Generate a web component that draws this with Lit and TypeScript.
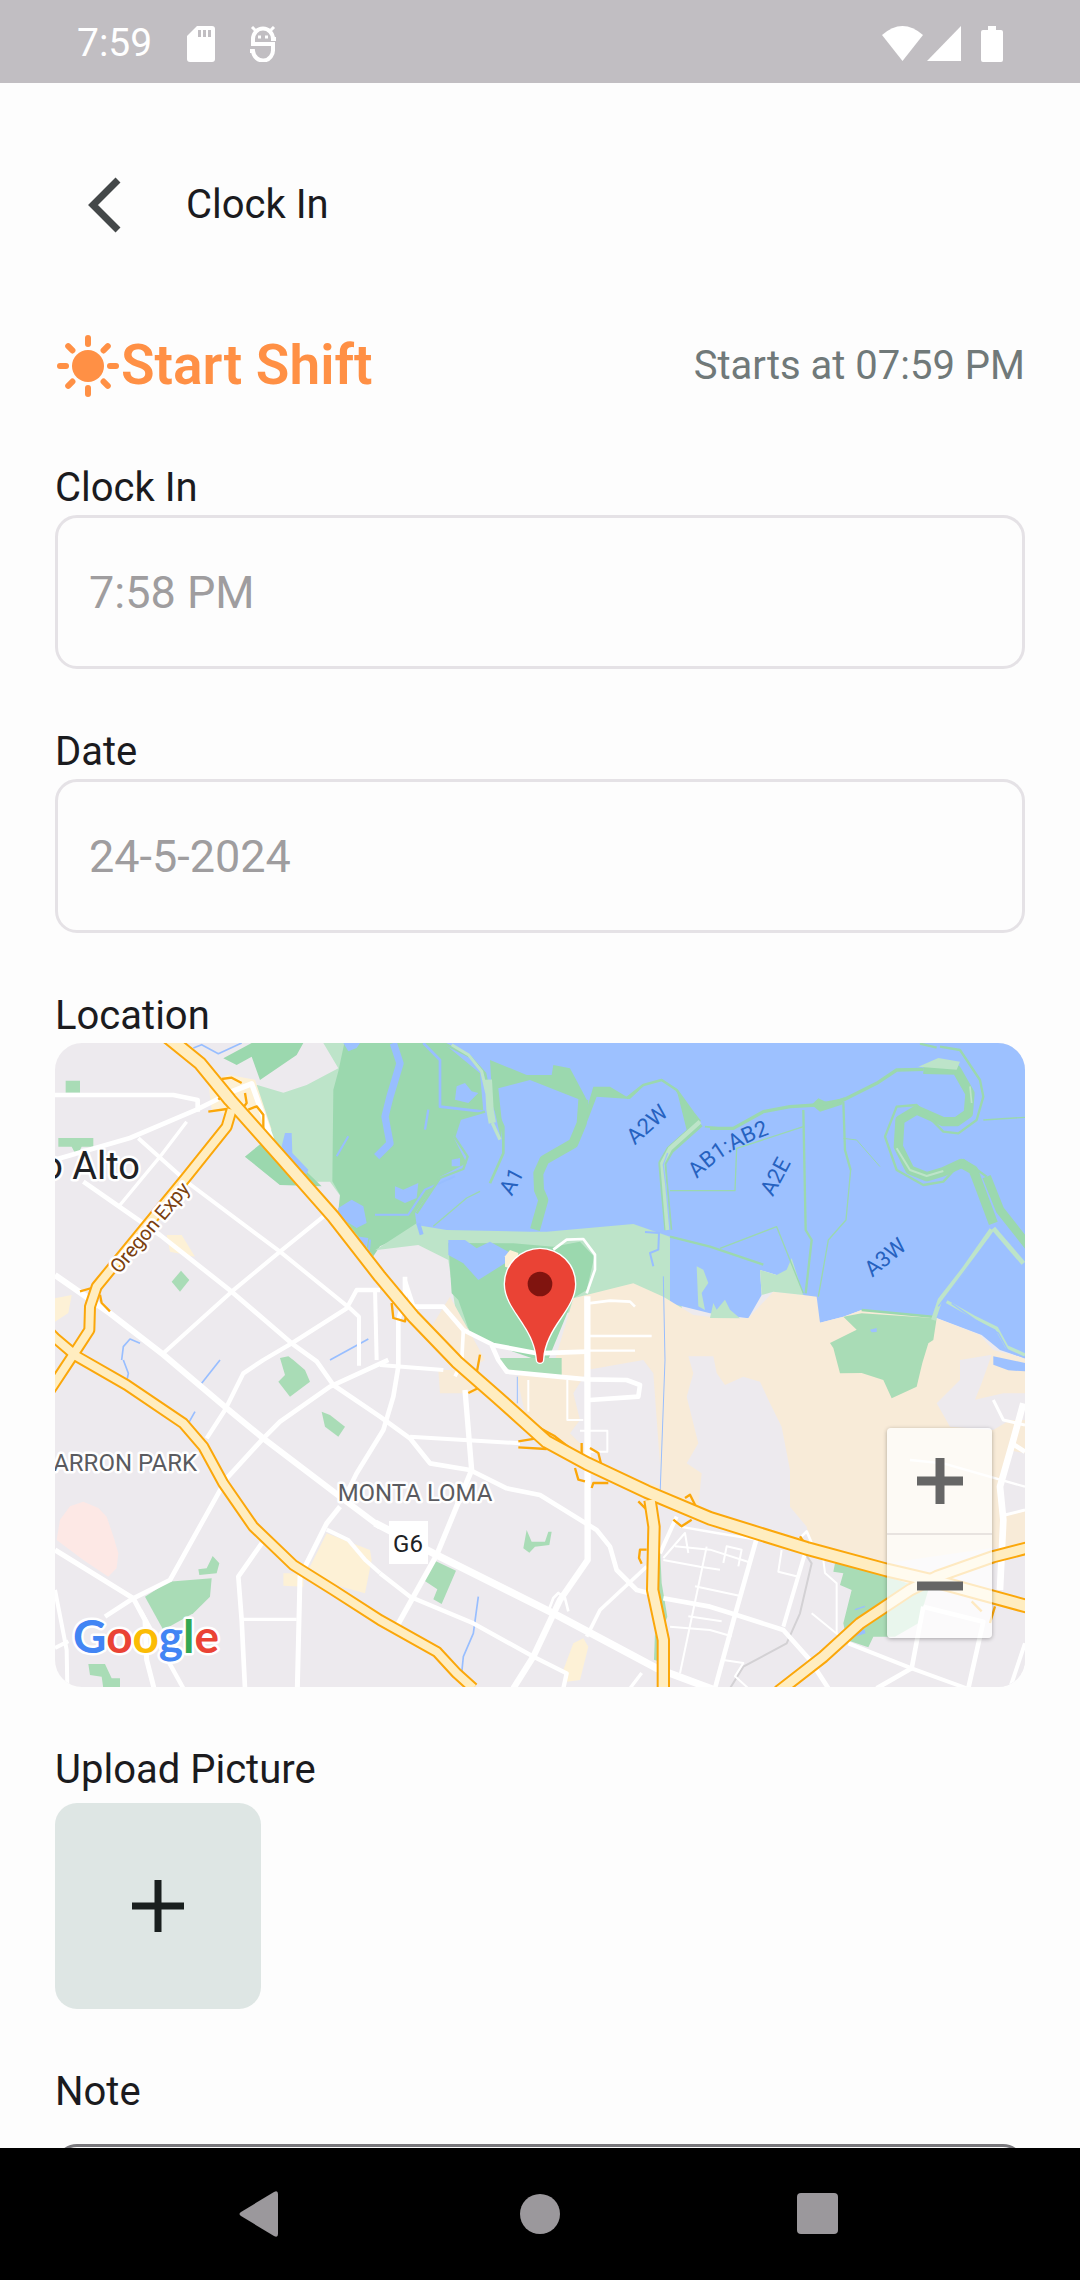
import { LitElement, html, svg, css } from "lit";
import { customElement, state } from "lit/decorators.js";

// Map geometry is stored in thirds of a pixel, on a 2910 x 1932 sheet.
const AREAS: [string, string][] = [
  // parks and marsh
  ["light", "607,126 685,149 755,126 850,76 805,0 900,0 900,520 825,416 785,416 675,426 570,341 625,296 650,281 600,126"],
  ["marsh", "505,46 590,0 745,0 725,36 615,111 590,41 545,66"],
  ["marsh", "570,341 625,296 650,285 800,430 675,426"],
  ["marsh", "868,0 850,85 835,140 832,415 855,455 850,505 955,640 975,610 1100,555 1300,420 1300,0"],
  ["light", "960,622 1085,541 1175,555 1435,560 1475,560 1735,540 1850,566 1850,731 1880,736 1880,800 1735,760 1595,800 1210,861 1180,651 1090,606"],
  ["marsh", "1180,600 1375,601 1495,611 1575,596 1618,641 1595,741 1555,766 1475,961 1375,926 1245,871 1210,771 1190,751"],
  ["water", "1165,0 2910,0 2910,946 2835,921 2780,876 2635,821 2420,801 2365,821 2295,839 2245,756 2165,696 2115,681 2120,756 2080,826 1965,811 1845,781 1845,581 1735,543 1475,566 1425,566 1175,561 1085,546 1080,511 1155,401 1235,361 1195,281 1215,226 1285,206 1275,91"],
  ["water", "1180,591 1230,591 1265,616 1305,596 1360,626 1350,661 1270,711 1225,661 1180,636"],
  ["tan", "1555,766 1735,721 1825,761 1915,816 1965,821 2055,826 2080,826 2155,746 2245,756 2285,761 2295,839 2365,821 2420,801 2645,826 2775,876 2815,921 2910,946 2910,1501 2495,1561 2265,1501 1965,1406 1825,1351 1575,1231 1415,1131 1385,1001 1500,951"],
  ["land", "1580,1011 1595,981 1765,951 1795,991 1820,1331 1675,1291 1605,1231 1545,1171 1575,1131 1555,1051"],
  ["land", "1900,940 1975,940 1985,990 2010,1026 2065,1001 2115,1016 2145,1081 2180,1151 2205,1281 2205,1391 2255,1451 2265,1496 1965,1406 1930,1390 1940,1291 1895,1261 1930,1201 1895,1061 1915,991"],
  ["land", "2715,951 2810,935 2780,1020 2760,1070 2845,1051 2910,1051 2910,1131 2865,1131 2815,1161 2685,1151 2645,1081 2685,1041 2715,1011"],
  ["land", "2835,1301 2860,1221 2910,1231 2910,1401 2845,1421"],
  ["land", "2310,1560 2910,1701 2910,1932 2200,1932"],
  ["light", "2115,681 2165,696 2195,680 2210,645 2245,756 2155,746 2120,756"],
  ["light", "1965,825 1975,780 1985,800 2010,770 2025,800 2055,826"],
  ["light", "1925,670 1945,680 1960,720 1940,750 1950,801 1930,790"],
  ["park", "2420,811 2645,826 2635,891 2620,901 2602,960 2585,1031 2510,1066 2485,1011 2420,990 2355,991 2335,915 2325,900 2405,860 2365,821"],
  ["water", "2815,940 2910,960 2910,985 2860,982 2815,965"],
  ["park", "1325,945 1520,945 1520,999 1375,993"],
  ["park", "32,113 75,113 75,149 32,149"],
  ["park", "10,285 115,285 115,311 80,311 65,340 50,311 10,311"],
  ["park", "350,716 375,746 403,711 378,683"],
  ["park", "675,945 700,940 715,951 750,981 765,1016 705,1061 670,1016 690,996"],
  ["park", "800,1106 825,1116 870,1151 850,1181 810,1151"],
  ["park", "270,1661 340,1616 470,1606 465,1661 415,1711 325,1761"],
  ["park", "430,1579 455,1576 473,1539 493,1561 485,1591 433,1596"],
  ["park", "100,1863 150,1863 170,1906 195,1906 195,1936 145,1936 140,1901 105,1896"],
  ["park", "1135,1551 1203,1583 1160,1683 1135,1669 1147,1639 1105,1611"],
  ["park", "1415,1461 1430,1496 1470,1496 1480,1466 1490,1466 1483,1506 1440,1511 1423,1529 1405,1516"],
  ["park", "1815,1511 1820,1620 1837,1721 1830,1740 1800,1650"],
  ["park", "1800,1770 1825,1860 1797,1850"],
  ["park", "2340,1561 2405,1571 2620,1641 2590,1741 2520,1781 2480,1781 2455,1781 2440,1813 2375,1791 2365,1741 2390,1641 2355,1626 2365,1591 2335,1586"],
  ["cream", "815,1471 945,1521 950,1551 930,1651 860,1631 755,1591"],
  ["cream", "685,1591 745,1591 745,1631 685,1628"],
  ["cream", "1585,1786 1600,1811 1575,1911 1535,1916 1525,1881 1555,1801"],
  ["cream", "335,576 380,576 420,641 345,626"],
  ["cream", "0,766 50,756 40,810 0,836"],
  ["cream", "460,120 520,95 600,110 650,260 560,230 470,200"],
  ["tan", "1150,981 1275,981 1275,1051 1155,1051"],
  ["tan", "1185,761 1240,860 1290,950 1240,980 1130,850"],
  ["cream", "1350,640 1365,621 1390,630 1380,680 1350,671"],
  ["rose", "85,1376 130,1395 155,1421 175,1480 190,1531 185,1575 160,1601 85,1551 5,1491 15,1430 45,1390"],
  // ponds inside the marsh
  ["water", "865,0 915,0 905,15 880,25"],
  ["water", "690,270 710,270 712,330 760,380 755,393 710,380 680,310"],
  ["water", "850,495 890,470 925,490 935,540 905,555 850,520"],
  ["water", "905,580 940,585 935,615 915,605"],
  ["water", "1020,430 1045,440 1090,420 1085,465 1050,480 1020,465"],
  ["water", "1205,130 1230,120 1250,145 1270,150 1240,180 1200,170"],
  ["water", "1190,350 1215,345 1215,370 1190,370"],
  ["water", "2445,860 2465,855 2465,867 2450,868"],
];

const CHANNELS: [number, string][] = [
  [22, "1015,0 1035,61 1005,161 990,221 1005,301 965,341"],
  [8, "1105,0 1155,51 1155,191 1285,206"],
  [7, "1120,200 1110,260"],
  [6, "960,515 1060,515 1110,440 1200,400"],
  [12, "1090,541 1100,575"],
  [6, "1770,567 1812,570 1810,620 1785,630 1795,670"],
  [6, "940,640 945,590"],
  [6, "845,340 880,280"],
  [5, "200,951 205,911 225,888 255,901"],
  [5, "205,951 220,991 215,1016"],
  [5, "495,951 440,1021"],
  [5, "420,1106 400,1141"],
  [5, "825,951 940,888"],
  [5, "415,15 440,5 490,32 560,0"],
  [5, "1270,1661 1255,1771 1225,1841 1220,1891"],
  [3, "1825,700 1830,951 1815,1361"],
  [3, "1387,1001 1387,1081"],
  [4, "2400,1700 2430,1690"],
  [12, "2400,1775 2430,1765"],
];

const LEVEES: [number, string][] = [
  [8, "1165,0 1245,41 1290,91 1305,161 1345,251 1345,331 1305,421"],
  [7, "1290,206 1215,228 1198,281 1238,341 1225,378 1155,405 1085,511"],
  [4, "1135,550 1235,465 1275,445"],
  [30, "1585,170 1580,241 1555,301 1468,351 1450,391 1452,441 1465,471 1440,560"],
  [8, "1715,166 1765,126 1820,111 1865,141 1915,211 1935,236"],
  [24, "1935,241 1845,321 1822,361 1827,421 1840,561"],
  [4, "1845,443 2040,443 2045,316 2245,251"],
  [5, "1950,251 2030,258"],
  [10, "1965,256 2035,256 2125,206 2205,191 2285,186 2365,171 2465,121 2525,81 2605,79"],
  [28, "2605,79 2705,81 2745,151 2740,211 2705,236 2665,236 2585,201 2535,231 2530,311 2565,381 2615,401 2665,386 2720,361 2755,381 2785,461 2815,541"],
  [7, "2655,11 2715,21 2775,111 2785,161 2765,231 2710,271 2665,266 2585,186 2525,191 2490,281 2525,381 2605,426 2665,416 2725,351 2795,401"],
  [26, "2795,401 2835,501 2925,615"],
  [7, "2245,201 2252,561 2270,591 2252,751"],
  [7, "2365,176 2370,321 2387,381"],
  [4, "2387,381 2373,531 2320,591 2290,761"],
  [4, "1995,616 2165,551 2245,751"],
  [7, "1845,581 1965,611 2125,665"],
  [3, "2365,286 2405,291 2475,371"],
  [4, "2785,231 2910,223"],
  [7, "2595,2 2645,14"],
  [8, "2420,801 2640,822"],
];

const PALE: [number, string][] = [
  [9, "1190,5 1240,35 1280,85 1295,150"],
  [22, "1300,110 1305,200 1312,240"],
  [10, "1312,240 1335,290"],
  [13, "1935,236 1845,317 1822,361 1827,421 1838,561"],
  [14, "2810,560 2725,681 2655,771 2635,831"],
  [14, "2815,556 2905,661"],
  [10, "2675,776 2755,821 2825,856 2855,911 2910,936"],
  [6, "2525,316 2565,381 2615,399 2665,384"],
  [5, "2745,130 2750,180"],
];

const STREETS: [number, string][] = [
  [14, "0,156 355,156 428,171 428,206"],
  [14, "0,350 225,285 425,200 525,150"],
  [16, "520,150 590,122 650,290"],
  [12, "250,286 400,420 675,626 885,796 912,821 912,968"],
  [14, "85,416 315,576 530,746 710,901 785,955 835,1026 975,1121 1065,1186 1125,1261 1245,1281 1355,1336 1455,1356 1625,1461 1665,1511 1685,1581 1745,1641 1805,1656"],
  [10, "395,236 315,341 195,486"],
  [18, "0,696 165,811 325,935 515,1096 625,1186 855,1361 975,1451"],
  [22, "960,1440 1145,1536 1505,1716 1805,1876 1990,1945"],
  [12, "805,521 675,626 530,746 325,931"],
  [13, "975,741 905,741 875,796 710,901 625,951 565,991 510,1101 455,1186"],
  [14, "1000,951 825,1031 675,1136 625,1186 515,1306 345,1611 235,1666 150,1721"],
  [15, "0,1521 235,1666 270,1731 275,1851 297,1936"],
  [13, "255,1701 385,1936"],
  [12, "0,1641 35,1821 37,1936"],
  [12, "0,1815 40,1795"],
  [14, "620,1501 550,1601 560,1731 570,1936"],
  [10, "560,1729 725,1729"],
  [15, "855,1391 815,1441 735,1601 727,1936"],
  [12, "815,1460 880,1491 930,1550 975,1590"],
  [14, "1050,701 1050,761 1030,831 1030,971 1015,1061 985,1161 905,1291 865,1371"],
  [12, "960,735 965,951"],
  [12, "975,966 1165,981"],
  [16, "1230,1041 1250,1281 1145,1536 1025,1751"],
  [12, "1065,1181 1395,1201"],
  [8, "1495,620 1535,590 1585,588 1620,635 1620,680 1595,751"],
  [19, "1597,760 1598,1551 1515,1671 1435,1841 1375,1936"],
  [14, "1050,715 1075,791 1165,791 1225,861 1315,906 1445,931 1595,926"],
  [11, "1225,861 1220,960 1200,1000"],
  [14, "1310,906 1330,951 1355,986 1595,1009 1715,1011 1755,1026 1750,1061 1605,1071"],
  [6, "1537,1011 1537,1131 1585,1131"],
  [6, "1420,1011 1420,1106"],
  [6, "1575,1163 1657,1163 1657,1226 1605,1226"],
  [8, "1600,781 1665,773 1725,776 1740,791"],
  [7, "1600,879 1790,879"],
  [7, "1600,923 1740,923"],
  [11, "1775,1571 1635,1701 1595,1781"],
  [13, "975,1591 1065,1661 1255,1741 1435,1841 1535,1891 1525,1936"],
  [10, "1760,1890 1725,1936"],
  [8, "1480,1705 1495,1665 1510,1650 1530,1665 1540,1705"],
  [14, "1825,1666 1965,1691 2045,1716 2185,1761 2265,1851 2320,1936"],
  [14, "2105,1486 2040,1716 1980,1936"],
  [12, "2250,1531 2185,1751"],
  [12, "2380,1801 2570,1876 2735,1936"],
  [14, "2605,1691 2570,1876 2465,1936"],
  [14, "2605,1691 2785,1736 2740,1936"],
  [12, "2910,1801 2865,1936"],
  [20, "2905,1081 2875,1191 2835,1331 2845,1431 2835,1641"],
  [9, "2815,1071 2845,1131 2910,1146"],
  [14, "2870,1201 2910,1226"],
  [7, "2565,1251 2665,1261 2910,1331"],
  [9, "2850,1416 2910,1401"],
  [12, "1865,1421 1815,1531"],
  [7, "1875,1451 1985,1470 2105,1490"],
  [6, "1825,1551 1935,1571 1995,1580"],
  [6, "1955,1511 1875,1891"],
  [6, "1845,1751 1965,1761 2030,1780"],
  [6, "1825,1545 1890,1470 1900,1530"],
  [6, "1860,1510 1965,1520 2090,1560"],
  [6, "1920,1630 2060,1660"],
  [6, "1900,1720 2000,1735"],
  [6, "2005,1560 2015,1510 2060,1520 2050,1570"],
  [6, "2180,1521 2170,1586 2230,1601"],
  [6, "2305,1551 2310,1590 2345,1621 2345,1771"],
  [6, "2270,1711 2350,1776"],
  [6, "2000,1850 2065,1860 2040,1900 2080,1936"],
  [8, "2240,1480 2255,1465 2270,1500"],
];

const RAMPS = [
  "460,206 515,198 515,225",
  "500,108 530,104 560,120 M490,170 520,140",
  "570,150 575,180 560,200 M580,200 605,190 625,215 625,260",
  "75,745 110,735 M135,755 140,780 165,805",
  "1010,780 1015,825 1050,835 1055,810",
  "1275,935 1265,990 M1240,1050 1270,1035",
  "1390,1195 1440,1187 M1390,1213 1475,1218",
  "1580,1200 1580,1240 M1560,1275 1570,1310 1590,1315",
  "1605,1215 1630,1230 1640,1270 M1610,1335 1615,1320 1660,1320",
  "1400,1125 1500,1180 1570,1235",
  "1650,1275 1770,1325 1800,1360",
  "1750,1375 1775,1400 1785,1450",
  "1890,1365 1905,1355 1925,1395 M1855,1430 1880,1450 1910,1430",
  "1775,1520 1755,1520 1752,1545 1760,1562",
  "2235,1480 2245,1495",
  "2750,1675 2780,1705 M2820,1690 2805,1740",
];

const HIGHWAYS: [number, string][] = [
  [36, "-15,870 0,885 65,940 215,1026 385,1141 445,1211 505,1321 595,1451 715,1566 835,1641 975,1731 1145,1826 1205,1891 1255,1936"],
  [36, "530,200 515,251 395,401 125,731 105,791 103,861 55,935 -15,1041"],
  [40, "1785,1371 1797,1451 1793,1641 1825,1791 1825,1940"],
  [40, "2920,1514 2815,1541 2645,1601 2565,1641 2415,1741 2305,1841 2170,1946"],
  [44, "335,-20 435,61 525,171 685,351 835,521 975,701 1075,821 1205,956 1325,1061 1475,1196 1595,1261 1775,1346 1965,1426 2255,1516 2495,1581 2645,1616 2920,1691"],
];

@customElement("clock-in-map")
export class ClockInMap extends LitElement {
  private _lines(list: [number, string][], cls: string) {
    return list.map(
      ([width, points]) => svg`<path class=${cls} stroke-width=${width} d=${"M" + points}></path>`
    );
  }

  render() {
    return html`
      <svg class="canvas" viewBox="0 0 970 644" preserveAspectRatio="xMidYMid slice" role="img" aria-label="Map">
        <g transform="scale(0.33333)">
          ${AREAS.map(([kind, points]) => svg`<polygon class=${kind} points=${points}></polygon>`)}
          ${this._lines(CHANNELS, "channel")}
          <path class="marsh" d="M1305 51L1415 96 1490 96 1495 66 1545 76 1585 151 1600 180 1425 111 1330 136 1342 250 1338 290 1312 170Z
            M1615 131L1665 131 1715 161 1760 135 1725 168 1625 161 1595 240 1570 300 1540 320 1580 250Z
            M1865 141L1895 261 1935 236Z M2270 185L2290 166 2320 180 2370 162 2360 185 2295 206Z"></path>
          ${this._lines(LEVEES, "levee")} ${this._lines(PALE, "pale")}
          <path class="light" d="M2590 71L2650 45 2715 56 2705 80Z"></path>
          <path class="seam" d="M1838 330L1825 365 1832 421 1845 561M2690 781L2760 830 2830 870 2860 925 2910 945M2800 590L2650 790M2835 565L2910 645"></path>
          <path class="trail" d="M2250 1531L2270 1561 2235 1711 2195 1801 2065 1871 2025 1936"></path>
          ${this._lines(STREETS, "street")}
          ${RAMPS.map((d) => svg`<path class="ramp" d=${"M" + d}></path>`)}
          ${this._lines(HIGHWAYS, "edge")}
          ${HIGHWAYS.map(
            ([width, points]) => svg`<path class="lane" stroke-width=${width - 12} d=${"M" + points}></path>`
          )}
        </g>

        <text class="city" x="85" y="136" text-anchor="end">o Alto</text>
        <text class="town" x="142" y="428" text-anchor="end">ARRON PARK</text>
        <text class="town" x="360" y="458" text-anchor="middle">MONTA LOMA</text>
        <rect class="shield" x="334" y="478" width="39" height="43"></rect>
        <text class="route" x="353" y="509" text-anchor="middle">G6</text>
        <g transform="translate(100 189) rotate(-50)"><text class="road" text-anchor="middle">Oregon Expy</text></g>
        <g transform="translate(463 142) rotate(-62)"><text class="pond" text-anchor="middle">A1</text></g>
        <g transform="translate(597 87) rotate(-42)"><text class="pond" text-anchor="middle">A2W</text></g>
        <g transform="translate(727 137) rotate(-62)"><text class="pond" text-anchor="middle">A2E</text></g>
        <g transform="translate(835 220) rotate(-40)"><text class="pond" text-anchor="middle">A3W</text></g>
        <path id="slough" fill="none" d="M642 136Q668 108 712 92"></path>
        <text class="pond"><textPath href="#slough">AB1:AB2</textPath></text>

        <text class="brand" x="18" y="610">
          <tspan fill="#4285f4">G</tspan><tspan fill="#ea4335">o</tspan><tspan fill="#fbbc05">o</tspan><tspan fill="#4285f4">g</tspan><tspan fill="#34a853">l</tspan><tspan fill="#ea4335">e</tspan>
        </text>

        <g transform="scale(0.33333)">
          <path class="pin" d="M1350 723a105 105 0 0 1 210 0C1560 800 1470 850 1464 950a9 9 0 0 1-18 0C1440 850 1350 800 1350 723Z"></path>
          <circle cx="1455" cy="723" r="37" fill="#80140f"></circle>
        </g>
      </svg>

      <div class="zoom">
        <button type="button" aria-label="Zoom in">
          <svg width="46" height="46"><path d="M23 0V46M0 23H46"></path></svg>
        </button>
        <button type="button" aria-label="Zoom out">
          <svg width="46" height="46"><path d="M0 23H46"></path></svg>
        </button>
      </div>
    `;
  }

  static styles = css`
    :host {
      display: block;
      position: relative;
      overflow: hidden;
      border-radius: 27px;
      background: #edeaee;
    }

    .canvas {
      display: block;
      width: 100%;
      height: 644px;
      font-family: Roboto, sans-serif;
    }

    .land {
      fill: #edeaee;
    }

    .water {
      fill: #9dc1ff;
    }

    .marsh {
      fill: #9bd8ae;
    }

    .light {
      fill: #bde4c9;
    }

    .park {
      fill: #a9dcb6;
    }

    .tan {
      fill: #f8ebd8;
    }

    .cream {
      fill: #fdf1d6;
    }

    .rose {
      fill: #fde8e5;
    }

    path {
      stroke-linejoin: round;
    }

    .channel,
    .levee,
    .pale,
    .seam,
    .trail,
    .street,
    .ramp,
    .edge,
    .lane {
      fill: none;
    }

    .channel {
      stroke: #98beff;
    }

    .levee {
      stroke: #9bd8ae;
    }

    .pale {
      stroke: #bde4c9;
    }

    .seam {
      stroke: #9dc1ff;
      stroke-width: 4;
    }

    .trail {
      stroke: #d3d1d4;
      stroke-width: 6;
    }

    .street {
      stroke: #ffffff;
    }

    .ramp {
      stroke: #fba70a;
      stroke-width: 7;
    }

    .edge {
      stroke: #fba70a;
    }

    .lane {
      stroke: #ffedc0;
    }

    .city,
    .town,
    .road,
    .brand {
      paint-order: stroke;
      stroke: #ffffff;
      stroke-width: 5px;
      stroke-linejoin: round;
    }

    .city {
      font-size: 38px;
      fill: #202124;
    }

    .town {
      font-size: 24px;
      fill: #5a5b60;
    }

    .road {
      font-size: 20px;
      fill: #7a400f;
    }

    .route {
      font-size: 24px;
      fill: #202124;
    }

    .shield {
      fill: #ffffff;
    }

    .pond {
      font-size: 22px;
      fill: #2662c0;
    }

    .brand {
      font-family: Lato, sans-serif;
      font-size: 46px;
      font-weight: 700;
    }

    .pin {
      fill: #ea4335;
      stroke: #ffffff;
      stroke-width: 8;
      paint-order: stroke;
    }

    .zoom {
      position: absolute;
      right: 33px;
      bottom: 49px;
      width: 105px;
      border-radius: 4px;
      background: rgba(255, 255, 255, 0.75);
      box-shadow: 0 1px 4px rgba(0, 0, 0, 0.3);
    }

    .zoom button {
      display: flex;
      align-items: center;
      justify-content: center;
      width: 100%;
      height: 105px;
      padding: 0;
      border: none;
      background: none;
      cursor: pointer;
    }

    .zoom button + button {
      box-shadow: inset 0 2px #e8e3e0;
    }

    .zoom path {
      stroke: #666666;
      stroke-width: 9;
    }
  `;
}

@customElement("app-root")
export class AppRoot extends LitElement {
  @state() private _time = "7:58 PM";
  @state() private _date = "24-5-2024";

  private _statusBar() {
    return html`
      <div class="status">
        <span>7:59</span>
        <svg class="status__sd" width="28" height="36" viewBox="0 0 28 36">
          <path fill="#fff" d="M10 0H25a3 3 0 0 1 3 3V33a3 3 0 0 1-3 3H3a3 3 0 0 1-3-3V10Z"></path>
          <path stroke="#c1bec2" stroke-width="3" d="M12.500 4V11M17.500 4V11M22.500 4V11"></path>
        </svg>
        <svg width="26" height="36" viewBox="0 0 26 36" fill="none" stroke="#fff" stroke-width="4">
          <path d="M26 13H23A10 10.500 0 0 0 3 13V18H23V23A10 10.500 0 0 1 3 25H0"></path>
          <path stroke-width="3" d="M6 5L2 1M20 5L24 1M8 11H11M15 11H18"></path>
        </svg>
        <span class="status__space"></span>
        <svg width="41" height="35" viewBox="0 0 41 35">
          <path fill="#fff" d="M0 9Q20.500 -9 41 9L20.500 35Z"></path>
        </svg>
        <svg class="status__signal" width="34" height="35" viewBox="0 0 34 35">
          <path fill="#fff" d="M34 0V35H0Z"></path>
        </svg>
        <svg class="status__battery" width="22" height="36" viewBox="0 0 22 36">
          <path fill="#fff" d="M7 0H15V4H20a2 2 0 0 1 2 2V34a2 2 0 0 1-2 2H2a2 2 0 0 1-2-2V6a2 2 0 0 1 2-2H7Z"></path>
        </svg>
      </div>
    `;
  }

  private _navBar() {
    return html`
      <nav class="nav">
        <button type="button" aria-label="Back">
          <svg width="46" height="46" viewBox="0 0 46 46">
            <path d="M2 21L35 1Q39 -1 39 3V43Q39 47 35 45L2 25Q-1 23 2 21Z"></path>
          </svg>
        </button>
        <button type="button" aria-label="Home">
          <svg width="46" height="46" viewBox="0 0 46 46"><circle cx="23" cy="23" r="20"></circle></svg>
        </button>
        <button type="button" aria-label="Recent apps">
          <svg width="46" height="46" viewBox="0 0 46 46"><rect x="2" y="2" width="41" height="41" rx="4"></rect></svg>
        </button>
      </nav>
    `;
  }

  render() {
    return html`
      ${this._statusBar()}
      <main class="page">
        <header class="header">
          <button class="header__back" type="button" aria-label="Go back">
            <svg width="34" height="56" viewBox="0 0 34 56"><path d="M30 3L5 28L30 53"></path></svg>
          </button>
          <h1 class="header__title">Clock In</h1>
        </header>

        <section class="shift">
          <svg class="shift__sun" width="62" height="62" viewBox="-31 -31 62 62">
            <circle r="16"></circle>
            ${[0, 45, 90, 135, 180, 225, 270, 315].map(
              (angle) => svg`<path transform="rotate(${angle})" d="M0 -28V-22"></path>`
            )}
          </svg>
          <h2 class="shift__title">Start Shift</h2>
          <span class="shift__time">Starts at 07:59 PM</span>
        </section>

        <div class="field">
          <label for="time">Clock In</label>
          <input id="time" type="text" .value=${this._time} readonly />
        </div>
        <div class="field">
          <label for="date">Date</label>
          <input id="date" type="text" .value=${this._date} readonly />
        </div>
        <div class="field">
          <span class="field__label">Location</span>
          <clock-in-map></clock-in-map>
        </div>
        <div class="field">
          <label for="upload">Upload Picture</label>
          <button id="upload" class="upload" type="button" aria-label="Upload Picture">
            <svg width="52" height="52"><path d="M26 0V52M0 26H52"></path></svg>
          </button>
        </div>
        <div class="field">
          <label for="note">Note</label>
          <textarea id="note"></textarea>
        </div>
      </main>
      ${this._navBar()}
    `;
  }

  static styles = css`
    :host {
      display: flex;
      flex-direction: column;
      height: 100vh;
      background: #fdfdfd;
      color: #1b1b1e;
      font-family: Roboto, sans-serif;
      font-size: 40px;
      line-height: 55px;
    }

    * {
      box-sizing: border-box;
    }

    button {
      display: flex;
      align-items: center;
      justify-content: center;
      padding: 0;
      border: none;
      background: none;
      cursor: pointer;
    }

    .status {
      display: flex;
      flex: none;
      align-items: center;
      height: 83px;
      padding: 4px 77px 0;
      background: #c1bec2;
      color: #ffffff;
      font-size: 39px;
    }

    .status__sd {
      margin: 0 35px;
    }

    .status__space {
      flex: 1;
    }

    .status__signal {
      margin: 0 20px 0 4px;
    }

    .page {
      display: flex;
      flex: 1;
      flex-direction: column;
      gap: 55px;
      min-height: 0;
      padding: 55px;
      overflow-y: auto;
      scrollbar-width: none;
    }

    .header,
    .shift {
      display: flex;
      flex: none;
      align-items: center;
    }

    .header {
      gap: 32px;
      height: 133px;
    }

    .header__back {
      width: 99px;
      height: 99px;
    }

    .header__back path {
      fill: none;
      stroke: #444849;
      stroke-width: 7;
    }

    .header__title {
      margin: 0;
      font-size: 40px;
      font-weight: 400;
    }

    .shift {
      gap: 2px;
      height: 79px;
      padding-left: 2px;
    }

    .shift__sun {
      fill: #ff9045;
      stroke: #ff9045;
      stroke-width: 6;
      stroke-linecap: round;
    }

    .shift__sun circle {
      stroke: none;
    }

    .shift__title {
      flex: 1;
      margin: 0;
      color: #ff9045;
      font-size: 55px;
      font-weight: 600;
    }

    .shift__time {
      color: #707979;
    }

    .field {
      display: flex;
      flex: none;
      flex-direction: column;
    }

    input,
    textarea {
      width: 100%;
      border: 3px solid #e5e2e6;
      border-radius: 22px;
      outline: none;
      background: none;
      color: #9f9d9f;
      font-family: inherit;
      font-size: 45px;
    }

    input {
      height: 154px;
      padding: 0 31px;
    }

    textarea {
      height: 275px;
      margin-top: 25px;
      padding: 31px;
      border-color: #79787c;
      resize: none;
    }

    .upload {
      width: 206px;
      height: 206px;
      margin-top: 6px;
      border-radius: 22px;
      background: #dee6e4;
    }

    .upload path {
      stroke: #191f1e;
      stroke-width: 7;
    }

    .nav {
      display: flex;
      flex: none;
      justify-content: center;
      background: #000000;
    }

    .nav button {
      flex: 0 1 278px;
      height: 132px;
    }

    .nav svg {
      fill: #9b989c;
    }
  `;
}
